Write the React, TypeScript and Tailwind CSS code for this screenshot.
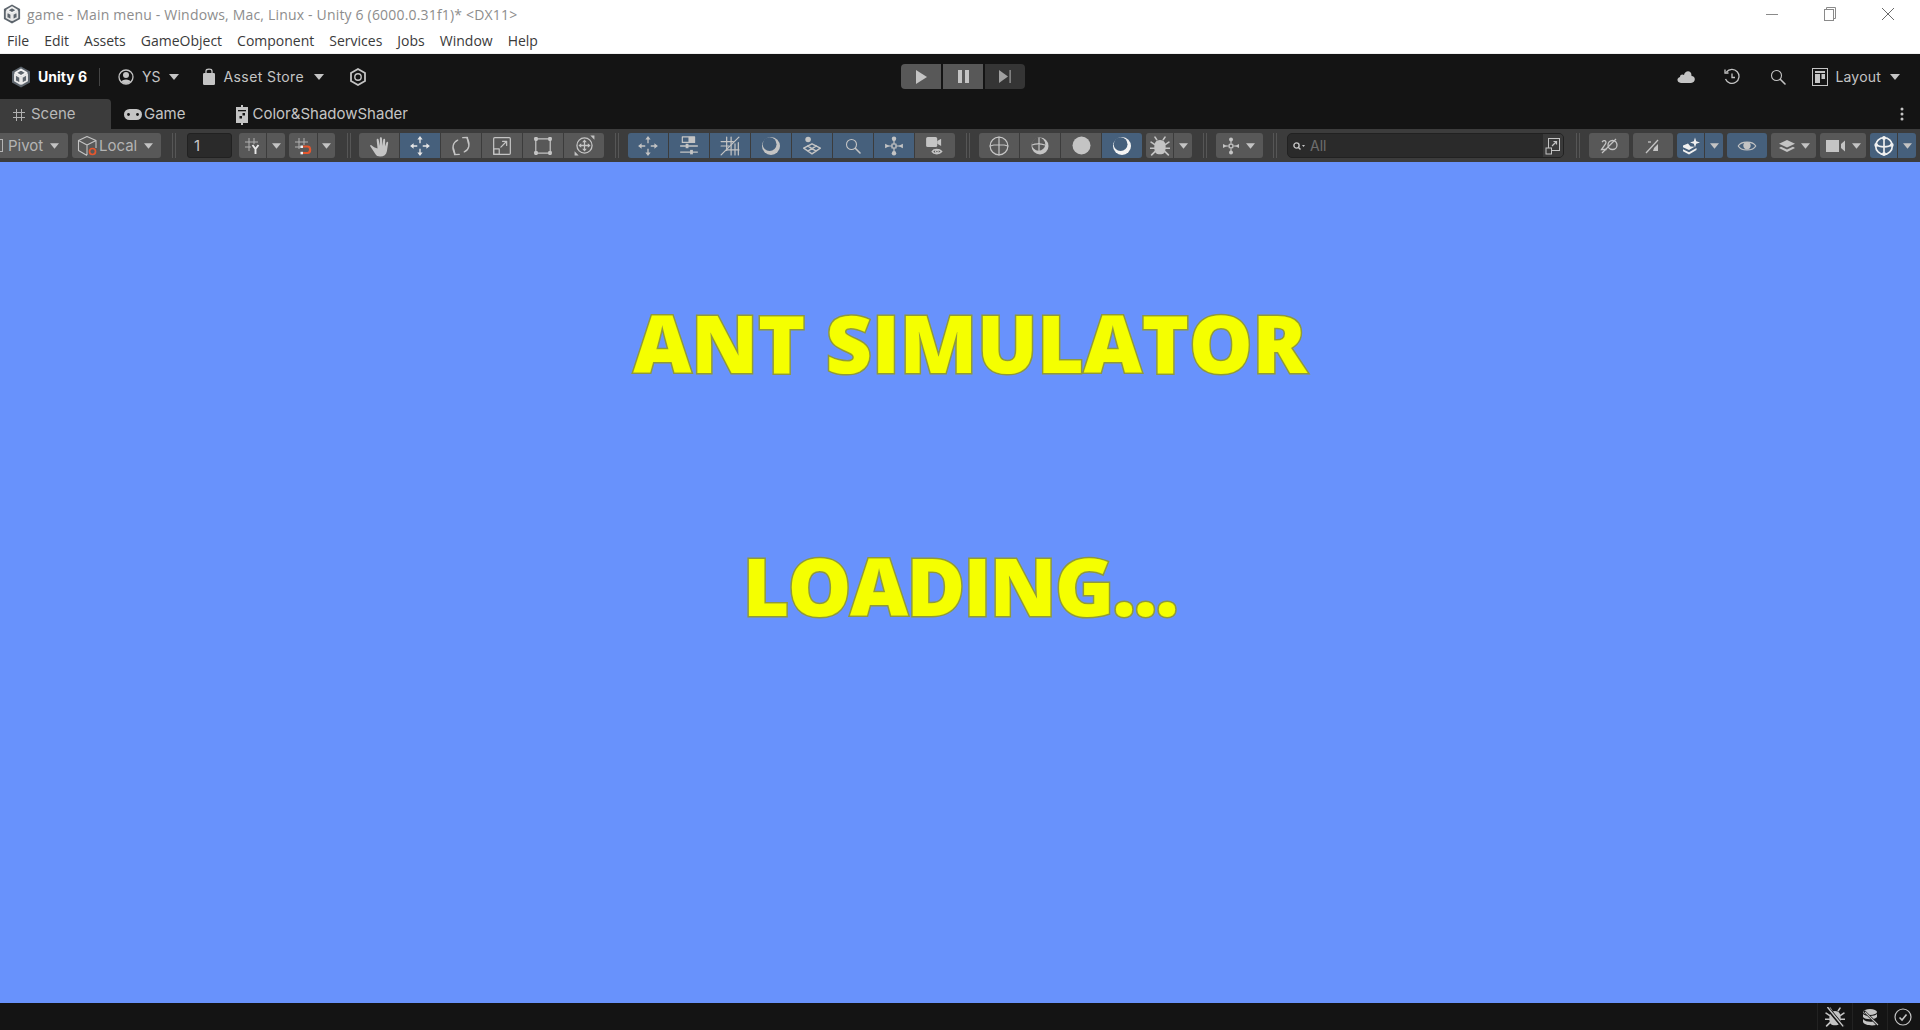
import React from "react";

const C = "#c4c4c4";
type P = { children?: React.ReactNode; s?: number; w?: number; h?: number; className?: string };
const Svg = ({ children, s = 18, w, h, className }: P) => (
  <svg width={w ?? s} height={h ?? s} viewBox="0 0 18 18" fill="none" stroke={C} strokeWidth={1.1} strokeLinecap="round" strokeLinejoin="round" className={className}>
    {children}
  </svg>
);
const Caret = ({ c = "#c4c4c4", w = 10, h = 6 }: { c?: string; w?: number; h?: number }) => (
  <svg width={w} height={h} viewBox="0 0 10 6"><path d="M0 0H10L5 6Z" fill={c} /></svg>
);
const Logo = ({ s = 20 }: { s?: number }) => (
  <svg width={s} height={s + 2} viewBox="0 0 20 22">
    <path d="M10 0.5 19 5.5V16.5L10 21.5 1 16.5V5.5Z" fill="#5d656d" />
    <path d="M10 3.5 15.5 6.8 10 10 4.5 6.8Z" fill="none" stroke="#f2f2f2" strokeWidth="2" strokeLinejoin="round" />
    <path d="M4 8.2 9.2 11.2V17.8L4 14.8Z M16 8.2 10.8 11.2V17.8L16 14.8Z" fill="none" stroke="#e8e8e8" strokeWidth="1.9" strokeLinejoin="round" />
  </svg>
);
const Move = ({ c = C }: { c?: string }) => (
  <svg width="22" height="22" viewBox="0 0 20 20" fill="none" stroke={c} strokeWidth="1.2">
    <path d="M10 3V7.5M10 12.5V17M3 10H7.5M12.5 10H17" />
    <path d="M10 1 12.4 4.2H7.6ZM10 19 12.4 15.8H7.6ZM1 10 4.2 7.6V12.4ZM19 10 15.8 7.6V12.4Z" fill={c} stroke="none" />
  </svg>
);
const Hand = () => (
  <Svg s={22}>
    <path d="M5 10 2.5 8.2C1.8 8 1.5 8.8 2 9.5L6 15.5C7 17 8 17.5 10 17.5 13 17.5 15 16 15.5 13L16.5 6.5C16.6 5.4 15.2 5.2 15 6.3L14 9.5 14 4C14 2.8 12.5 2.8 12.4 4L12 9 11.4 2.8C11.3 1.6 9.7 1.6 9.7 2.8L9.8 9 8.7 3.8C8.5 2.7 7 2.9 7.1 4.2L7.8 11Z" fill={C} stroke="none" />
  </Svg>
);
const Rotate = () => (
  <Svg s={22}>
    <path d="M6.3 4.2C2.3 6 1.2 11 4 15" />
    <path d="M3 11.4 3.8 16 7.6 15.8" />
    <path d="M11.7 13.8C15.7 12 16.8 7 14 3" />
    <path d="M15 6.6 14.2 2 10.4 2.2" />
  </Svg>
);
const Scale = () => (
  <Svg s={20}>
    <rect x="1.5" y="1.5" width="15" height="15" rx="1" />
    <rect x="1.5" y="11.5" width="5" height="5" />
    <path d="M8 10 13 5M9.5 4.8H13.2V8.5" />
  </Svg>
);
const RectT = () => (
  <Svg s={20}>
    <path d="M4 2.5H14M4 15.5H14M2.5 4V14M15.5 4V14" />
    <g fill={C} stroke="none"><rect x="1" y="1" width="3.4" height="3.4" rx="1" /><rect x="13.6" y="1" width="3.4" height="3.4" rx="1" /><rect x="1" y="13.6" width="3.4" height="3.4" rx="1" /><rect x="13.6" y="13.6" width="3.4" height="3.4" rx="1" /></g>
  </Svg>
);
const Transform = () => (
  <Svg s={21}>
    <circle cx="9" cy="9" r="6.5" />
    <path d="M5 9H13M9 5V13" />
    <path d="M9 3.8 11 6.2H7ZM9 14.2 11 11.8H7ZM3.8 9 6.2 7V11ZM14.2 9 11.8 7V11Z" fill={C} stroke="none" />
    <path d="M14 .5H17.5V4ZM.5 17.5V14L4 17.5Z" fill={C} stroke="none" />
  </Svg>
);
const Sliders = () => (
  <Svg s={20}>
    <rect x="3" y=".8" width="11" height="5" fill="none" />
    <rect x="8.5" y=".8" width="5.5" height="5" fill={C} stroke="none" />
    <path d="M1.5 9H16.5M1.5 14.5H16.5" strokeWidth="1.3" />
    <rect x="6" y="7" width="2.5" height="4" fill={C} stroke="none" />
    <rect x="10" y="12.5" width="2.5" height="4" fill={C} stroke="none" />
  </Svg>
);
const Hatch = () => (
  <Svg s={20}>
    <path d="M6 1V13M10 1V17M13.5 7V17M16.5 6V17M1 5H12M1 9H8" />
    <path d="M1 17 17 1" />
    <path d="M6 12.5H17" />
  </Svg>
);
const Moon = ({ bright }: { bright?: boolean }) => (
  <svg width="20" height="20" viewBox="0 0 20 20">
    <circle cx="10" cy="10" r="9" fill={bright ? "#f4f4f4" : C} />
    <circle cx="8.6" cy="8.2" r="6.9" fill="#46607c" />
  </svg>
);
const Diamond = () => (
  <Svg s={20}>
    <circle cx="5.5" cy="3.2" r="2.5" fill={C} stroke="none" />
    <path d="M1.5 11 9 7 16.5 11 9 16ZM5 8.8 12.8 13.6M13 8.8 5.2 13.6" strokeWidth="1.3" />
  </Svg>
);
const Search = ({ s = 18 }: { s?: number }) => (
  <Svg s={s}>
    <circle cx="7.5" cy="7.5" r="5" />
    <path d="M11.5 11.5 16 16" strokeWidth="1.6" />
  </Svg>
);
const Nodes = () => (
  <Svg s={20}>
    <rect x="7.2" y="7.2" width="3.6" height="3.6" />
    <path d="M9 4V7.2M9 10.8V14M4 9H7.2M10.8 9H14" />
    <g fill={C} stroke="none">
      <circle cx="9" cy="2.5" r="2" /><circle cx="9" cy="15.5" r="2" />
      <path d="M1 7 5 9 1 11Z M17 7 13 9 17 11Z" />
    </g>
  </Svg>
);
const CamEye = () => (
  <Svg s={20}>
    <rect x="1" y="1" width="10" height="9" rx="1.5" fill={C} stroke="none" />
    <path d="M11 4.5 14.5 2.5V9L11 7Z" fill={C} stroke="none" />
    <path d="M6.5 14C8 11.5 13 11.5 15 14 13 16.5 8 16.5 6.5 14Z" fill="#585858" strokeWidth="1.4" />
    <circle cx="10.7" cy="14" r="1.2" />
  </Svg>
);
const Globe = () => (
  <Svg s={20}>
    <circle cx="9" cy="9" r="8" />
    <path d="M1 9C4.5 7.5 13.5 7.5 17 9M9 1V17" />
  </Svg>
);
const GlobeHalf = () => (
  <svg width="20" height="20" viewBox="0 0 20 20" fill="none" stroke={C} strokeWidth="1.2">
    <circle cx="10" cy="10" r="8.5" fill={C} stroke="none" />
    <circle cx="8.6" cy="8.2" r="6.6" fill="#585858" stroke="none" />
    <path d="M2 9C5 7.8 11 7.8 15 9M9 1.6V15" />
  </svg>
);
const Bug = ({ slash }: { slash?: boolean }) => (
  <Svg s={20}>
    <path d="M5 5.5C6 3 12 3 13 5.5 14.5 7.5 14.5 13 13 15 11.5 17 6.5 17 5 15 3.5 13 3.5 7.5 5 5.5Z" fill={C} stroke="none" />
    <path d="M6 3.3 4.5 1M12 3.3 13.5 1M4 7.5 1 5.5M14 7.5 17 5.5M3.8 11H.5M14.2 11H17.5M4.5 14 1.5 17M13.5 14 16.5 17" strokeWidth="1.5" />
    {slash && <path d="M2 .5 16 17.5" stroke="#141414" strokeWidth="3.4" />}
    {slash && <path d="M2.5 .5 16 17" strokeWidth="1.3" />}
  </Svg>
);
const GridY = () => (
  <svg width="20" height="20" viewBox="0 0 20 20" fill="none" stroke="#b0b0b0" strokeWidth="1">
    <path d="M6 2V15M11 2V8M2 6H15M2 11H8" />
    <path d="M9.5 9 12.5 13 15.5 9M12.5 13V18" stroke="#e8e8e8" strokeWidth="1.9" />
  </svg>
);
const GridMag = () => (
  <svg width="20" height="20" viewBox="0 0 20 20" fill="none" stroke="#b0b0b0" strokeWidth="1">
    <path d="M6 2V13M11 2V9M2 6H15M2 11H8" />
    <path d="M10 10.5H14.5C18 10.5 18 17 14.5 17H10" stroke="#e4572e" strokeWidth="2.2" />
    <rect x="7.5" y="9.5" width="2.5" height="2.5" fill="#f0f0f0" stroke="none" />
    <rect x="7.5" y="15.8" width="2.5" height="2.5" fill="#f0f0f0" stroke="none" />
  </svg>
);
const Cube = () => (
  <svg width="22" height="22" viewBox="0 0 22 22" fill="none" stroke={C} strokeWidth="1.1" strokeLinejoin="round">
    <path d="M10 1.5 19 5.5V13M10 1.5 1.5 5.5V15.5L10 20.5M1.5 5.5 10 10V20M10 10 19 5.5" />
    <circle cx="15.5" cy="16.5" r="3" stroke="#e4572e" strokeWidth="1.7" />
  </svg>
);
const Sparkle = () => (
  <svg width="20" height="20" viewBox="0 0 20 20" fill="#f0f0f0">
    <path d="M14 1.5 15.2 5.3 19 6.5 15.2 7.7 14 11.5 12.8 7.7 9 6.5 12.8 5.3Z" />
    <path d="M2 9.5 7 7.5 9.5 10.5 13.5 10.8 8 14 2 11.2Z" />
    <path d="M2 13.2 8 16.2 15.5 12 15.5 14 8 18.5 2 15.2Z" />
  </svg>
);
const Eye = () => (
  <svg width="20" height="14" viewBox="0 0 22 16">
    <path d="M1 8C4 2 18 2 21 8 18 14 4 14 1 8Z" fill="none" stroke={C} strokeWidth="1.3" />
    <circle cx="11" cy="7.5" r="4.2" fill={C} />
  </svg>
);
const Layers = () => (
  <svg width="18" height="14" viewBox="0 0 18 14" fill={C}>
    <path d="M9 1 17 4.8 9 8.6 1 4.8Z" />
    <path d="M3 7.7 9 10.5 15 7.7 17 9 9 13 1 9Z" />
  </svg>
);
const Wire = () => (
  <Svg s={20}>
    <circle cx="9" cy="9" r="7.5" stroke="#f0f0f0" strokeWidth="1.5" />
    <path d="M2 7.5C5 10.5 13 10.5 16 7.5M9 1.5V16.5" stroke="#f0f0f0" strokeWidth="1.5" />
    <g fill="#f0f0f0" stroke="none"><circle cx="9" cy="1.8" r="1.7" /><circle cx="2" cy="8" r="1.7" /><circle cx="16" cy="8" r="1.7" /><circle cx="9" cy="16.2" r="1.7" /></g>
  </Svg>
);

const Btn = ({ w = 40, blue, children, className = "" }: { w?: number; blue?: boolean; children?: React.ReactNode; className?: string }) => (
  <div style={{ width: w }} className={`h-[25px] flex items-center justify-center shrink-0 ${blue ? "bg-[#46607c]" : "bg-[#585858]"} ${className}`}>
    {children}
  </div>
);
const Group = ({ children, className = "" }: { children: React.ReactNode; className?: string }) => (
  <div className={`flex gap-px rounded-[3px] overflow-hidden shrink-0 ${className}`}>{children}</div>
);
const Sep = ({ className = "" }: { className?: string }) => (
  <div className={`w-[4px] h-[25px] border-x border-[#565656] shrink-0 ${className}`} />
);

export default function App() {
  return (
    <div className="w-[1920px] h-[1030px] flex flex-col overflow-hidden bg-white [font-family:Inter,sans-serif]">
      {/* Windows title */}
      <header className="h-[54px] shrink-0 bg-white border-b border-[#f0f0f0] relative [font-family:'Open_Sans',sans-serif] text-[14px]">
        <div className="h-[28px] flex items-center pl-[3px]">
          <Logo s={18} />
          <span className="ml-[6px] text-[#8d8d8d] tracking-[0.18px] whitespace-nowrap">{"game - Main menu - Windows, Mac, Linux - Unity 6 (6000.0.31f1)* <DX11>"}</span>
          <div className="ml-auto flex items-center gap-[46px] pr-[26px]">
            <div className="w-[12px] h-px bg-[#8a8a8a]" />
            <svg width="12" height="14" viewBox="0 0 12 14" fill="none" stroke="#8a8a8a"><rect x=".5" y="2.5" width="9" height="11" fill="#fff" /><path d="M2.5 2.5V.5H11.5V11.5H9.5" /></svg>
            <svg width="12" height="12" viewBox="0 0 12 12" stroke="#6a6a6a"><path d="M0 0 12 12M12 0 0 12" /></svg>
          </div>
        </div>
        <nav className="h-[25px] flex items-center pl-[7px] gap-[15px] text-[#3a3a3a]">
          {["File", "Edit", "Assets", "GameObject", "Component", "Services", "Jobs", "Window", "Help"].map((m) => (
            <span key={m}>{m}</span>
          ))}
        </nav>
      </header>

      {/* Unity main toolbar */}
      <div className="h-[45px] shrink-0 bg-[#141414] flex items-center text-[14px] text-[#c4c4c4] relative">
        <div className="ml-[11px]"><Logo s={20} /></div>
        <span className="ml-[7px] font-bold text-white text-[14px]">Unity 6</span>
        <div className="ml-[12px] w-px h-[18px] bg-[#444]" />
        <svg className="ml-[18px]" width="16" height="16" viewBox="0 0 16 16"><circle cx="8" cy="8" r="7" fill="none" stroke={C} strokeWidth="1.3" /><circle cx="8" cy="6" r="3" fill={C} /><path d="M3 13C4 9.5 12 9.5 13 13L8 15Z" fill={C} /></svg>
        <span className="ml-[8px]">YS</span>
        <div className="ml-[8px]"><Caret /></div>
        <svg className="ml-[23px]" width="14" height="17" viewBox="0 0 14 17"><rect x="1" y="5" width="12" height="12" rx="1.2" fill={C} /><path d="M4 6V3C4 .6 10 .6 10 3V6" fill="none" stroke={C} strokeWidth="1.3" /></svg>
        <span className="ml-[8px] tracking-[0.4px]">Asset Store</span>
        <div className="ml-[10px]"><Caret /></div>
        <svg className="ml-[26px]" width="16" height="18" viewBox="0 0 16 18" fill="none" stroke={C}><path d="M8 1 15 5V13L8 17 1 13V5Z" strokeWidth="1.8" /><circle cx="8" cy="9" r="3.2" strokeWidth="1.4" /></svg>

        <div className="absolute left-[901px] top-[10px] flex gap-[2px] rounded-[4px] overflow-hidden">
          <div className="w-[40px] h-[25px] bg-[#585858] flex items-center justify-center"><svg width="11" height="14" viewBox="0 0 11 14"><path d="M0 0 11 7 0 14Z" fill={C} /></svg></div>
          <div className="w-[40px] h-[25px] bg-[#585858] flex items-center justify-center"><svg width="11" height="13" viewBox="0 0 11 13" fill={C}><rect width="4" height="13" /><rect x="7" width="4" height="13" /></svg></div>
          <div className="w-[40px] h-[25px] bg-[#353535] flex items-center justify-center"><svg width="12" height="13" viewBox="0 0 12 13" fill="#a0a0a0"><path d="M0 0 9 6.5 0 13Z" /><rect x="10.5" width="1.2" height="13" /></svg></div>
        </div>

        <div className="ml-auto flex items-center pr-[20px]">
          <svg width="18" height="13" viewBox="0 0 18 13" fill={C}><path d="M4 13C0 13-1 8 3 7 3 4 6 4 7 5 8 0 15 0 14.5 6 19 6 19 13 14 13Z" /></svg>
          <svg className="ml-[29px]" width="16" height="18" viewBox="0 0 16 18" fill="none" stroke={C} strokeWidth="1.3"><path d="M2.5 4A7 7 0 1 1 1.5 11" /><path d="M1 1.5V5H4.5M8 5.5V9.5H11" /></svg>
          <div className="ml-[29px]"><Search s={18} /></div>
          <svg className="ml-[25px]" width="16" height="18" viewBox="0 0 16 18" fill="none" stroke={C}><rect x=".5" y=".5" width="15" height="17" /><g fill={C} stroke="none"><rect x="3" y="3" width="10" height="2" /><rect x="3" y="6" width="5" height="9" /><rect x="9.5" y="6" width="3.5" height="5" /></g></svg>
          <span className="ml-[7px] tracking-[0.2px]">Layout</span>
          <div className="ml-[9px]"><Caret /></div>
        </div>
      </div>

      {/* Tabs */}
      <div className="h-[30px] shrink-0 bg-[#141414] flex text-[15px] text-[#c4c4c4]">
        <div className="w-[111px] bg-[#3c3c3c] rounded-tr-[4px] flex items-center pl-[13px] pt-[1px]">
          <svg width="12" height="12" viewBox="0 0 12 12" stroke="#b0b0b0"><path d="M3.5 0V12M8.5 0V12M0 3.5H12M0 8.5H12" /></svg>
          <span className="ml-[6px] text-[#b8b8b8]">Scene</span>
        </div>
        <div className="flex items-center ml-[13px] pt-[1px]">
          <svg width="18" height="11" viewBox="0 0 18 11"><rect width="18" height="11" rx="5.5" fill={C} /><circle cx="4.5" cy="5.5" r="1.4" fill="#141414" /><circle cx="13.5" cy="5.5" r="1.4" fill="#141414" /></svg>
          <span className="ml-[2px]">Game</span>
        </div>
        <div className="flex items-center ml-[49px] pt-[1px]">
          <svg width="14" height="20" viewBox="0 0 14 20"><path d="M6 0H8V2H13V18H8V20H6V18H1V2H6Z" fill={C} /><rect x="3" y="5" width="8" height="1.3" fill="#141414" /><rect x="4.5" y="11" width="2.5" height="2.5" fill="#141414" /><rect x="7.5" y="8" width="2.5" height="2.5" fill="#141414" /></svg>
          <span className="ml-[4px]">Color&amp;ShadowShader</span>
        </div>
        <svg className="ml-auto mr-[16px] self-center" width="4" height="14" viewBox="0 0 4 14" fill={C}><circle cx="2" cy="2" r="1.5" /><circle cx="2" cy="7" r="1.5" /><circle cx="2" cy="12" r="1.5" /></svg>
      </div>

      {/* Scene toolbar */}
      <div className="h-[33px] shrink-0 bg-[#3c3c3c] flex items-center text-[15px] text-[#b4b4b4] overflow-hidden">
        <Btn w={68} className="rounded-r-[3px] justify-start">
          <div className="w-[3px] h-[13px] border border-l-0 border-[#b4b4b4]" />
          <span className="ml-[5px] pt-[1px]">Pivot</span>
          <div className="ml-[7px]"><Caret w={9} h={6} /></div>
        </Btn>
        <Btn w={89} className="ml-[4px] rounded-[3px] justify-start pl-[5px]">
          <Cube />
          <span className="ml-[0px] pt-[1px]">Local</span>
          <div className="ml-[7px]"><Caret w={9} h={6} /></div>
        </Btn>
        <Sep className="ml-[11px]" />
        <div className="ml-[11px] w-[45px] h-[25px] bg-[#2a2a2a] border border-[#212121] rounded-[3px] flex items-center pl-[6px] pt-[1px] text-[#c8c8c8] shrink-0">1</div>
        <Group className="ml-[7px]">
          <Btn w={27}><GridY /></Btn>
          <Btn w={18}><Caret w={9} h={6} /></Btn>
        </Group>
        <Group className="ml-[4px]">
          <Btn w={28}><GridMag /></Btn>
          <Btn w={17}><Caret w={9} h={6} /></Btn>
        </Group>
        <Sep className="ml-[12px]" />
        <Group className="ml-[8px]">
          <Btn><Hand /></Btn>
          <Btn blue><Move c="#e6e6e6" /></Btn>
          <Btn><Rotate /></Btn>
          <Btn><Scale /></Btn>
          <Btn><RectT /></Btn>
          <Btn><Transform /></Btn>
        </Group>
        <Sep className="ml-[11px]" />
        <Group className="ml-[9px]">
          <Btn blue><Move /></Btn>
          <Btn blue><Sliders /></Btn>
          <Btn blue><Hatch /></Btn>
          <Btn blue><Moon /></Btn>
          <Btn blue><Diamond /></Btn>
          <Btn blue><Search s={18} /></Btn>
          <Btn blue><Nodes /></Btn>
          <Btn><CamEye /></Btn>
        </Group>
        <Sep className="ml-[11px]" />
        <Group className="ml-[9px]">
          <Btn><Globe /></Btn>
          <Btn><GlobeHalf /></Btn>
          <Btn><svg width="19" height="19" viewBox="0 0 19 19"><circle cx="9.5" cy="9.5" r="9" fill={C} /></svg></Btn>
          <Btn blue><Moon bright /></Btn>
        </Group>
        <Group className="ml-[4px]">
          <Btn w={27}><Bug /></Btn>
          <Btn w={18}><Caret w={9} h={6} /></Btn>
        </Group>
        <Sep className="ml-[11px]" />
        <Btn w={47} className="ml-[9px] rounded-[3px] gap-[5px]">
          <div className="-ml-[4px] scale-90"><Nodes /></div>
          <Caret w={9} h={6} />
        </Btn>
        <Sep className="ml-[10px]" />
        <div className="ml-[10px] w-[277px] h-[25px] bg-[#2a2a2a] border border-[#212121] rounded-[5px] flex items-center shrink-0">
          <svg className="ml-[5px]" width="12" height="8" viewBox="0 0 12 8" fill="none" stroke={C} strokeWidth="1.4"><circle cx="3.5" cy="3.5" r="2.6" /><path d="M5.5 5.5 7.5 7.5" /><path d="M9 3H12L10.5 5Z" fill={C} stroke="none" /></svg>
          <span className="ml-[5px] text-[#6e6e6e] text-[14px]">All</span>
          <div className="ml-auto w-[20px] h-full bg-[#3a3a3a] rounded-r-[4px] flex items-center justify-center">
            <svg width="16" height="18" viewBox="0 0 16 18" fill="none" stroke={C}><rect x="3.5" y="1.5" width="11" height="12" /><rect x="1" y="11" width="5.5" height="6" fill="#3a3a3a" /><path d="M7 9 11.5 4.5M8.5 4.5H11.5V7.5" strokeWidth="1.2" /></svg>
          </div>
        </div>
        <Sep className="ml-[12px]" />
        <Btn w={40} className="ml-[9px] rounded-[3px]">
          <svg width="20" height="16" viewBox="0 0 20 16" fill="none" stroke={C} strokeWidth="1.3"><path d="M3 4C5 2 7 2.5 7 4.5 7 6 4 9 2.5 11.5H7.5" /><circle cx="13.5" cy="7" r="4.5" /><path d="M3 15 17 1" /></svg>
        </Btn>
        <Btn w={40} className="ml-[4px] rounded-[3px]">
          <svg width="18" height="16" viewBox="0 0 18 16" fill="none" stroke={C} strokeWidth="1.3"><path d="M2 15 14 2" /><path d="M10 10 14 6V13H9" fill={C} stroke="none" /><path d="M4 4H7" /></svg>
        </Btn>
        <Group className="ml-[4px]">
          <Btn w={27} blue><Sparkle /></Btn>
          <Btn w={18} blue><Caret w={9} h={6} /></Btn>
        </Group>
        <Btn w={40} blue className="ml-[4px] rounded-[3px]"><Eye /></Btn>
        <Btn w={45} className="ml-[4px] rounded-[3px] gap-[5px]"><Layers /><Caret w={9} h={6} /></Btn>
        <Btn w={46} className="ml-[4px] rounded-[3px] gap-[6px]">
          <svg width="20" height="12" viewBox="0 0 20 12" fill={C}><rect width="13" height="12" /><path d="M15 4 19 .5V11.5L15 8Z" /></svg>
          <Caret w={9} h={6} />
        </Btn>
        <Group className="ml-[4px]">
          <Btn w={27} blue><Wire /></Btn>
          <Btn w={18} blue><Caret w={9} h={6} /></Btn>
        </Group>
      </div>

      {/* Scene canvas */}
      <main className="flex-1 min-h-0 bg-[#6892fc] flex flex-col items-center text-[#f5ff00] [font-family:'Open_Sans',sans-serif] font-extrabold uppercase [paint-order:stroke_fill] [-webkit-text-stroke:3px_#8f9a3a]">
        <div className="h-[100px] w-full shrink-0" />
        <div className="h-[160px] flex items-center ml-[20px] text-[80px] leading-none whitespace-nowrap tracking-[-0.1px]">Ant Simulator</div>
        <div className="h-[83px] w-full shrink-0" />
        <div className="h-[160px] flex items-center text-[80px] leading-none whitespace-nowrap tracking-[-1.6px]">Loading...</div>
      </main>

      {/* Status bar */}
      <footer className="h-[27px] shrink-0 bg-[#141414] flex items-center justify-end pr-[8px]">
        <div className="h-full flex items-center px-[7px] border-l border-[#222]"><Bug slash /></div>
        <div className="h-full flex items-center px-[8px] border-l border-[#222]">
          <svg width="18" height="18" viewBox="0 0 18 18" fill={C}><ellipse cx="9" cy="4" rx="7" ry="3" /><path d="M2 6C4 8.5 14 8.5 16 6V9C14 12 4 12 2 9ZM2 11C4 14 10 14 12 13.5L15 17C10 18 3 17 2 14Z" /><path d="M3 3 17 17" stroke="#141414" strokeWidth="2.4" /><path d="M4 4 17 17" stroke={C} strokeWidth="1.1" /></svg>
        </div>
        <div className="h-full flex items-center pl-[6px] border-l border-[#222]">
          <svg width="18" height="18" viewBox="0 0 18 18" fill="none" stroke={C}><circle cx="9" cy="9" r="8" strokeWidth="1.2" /><path d="M5.5 9.5 8 12 12.5 6.5" strokeWidth="1.6" /></svg>
        </div>
      </footer>
    </div>
  );
}
